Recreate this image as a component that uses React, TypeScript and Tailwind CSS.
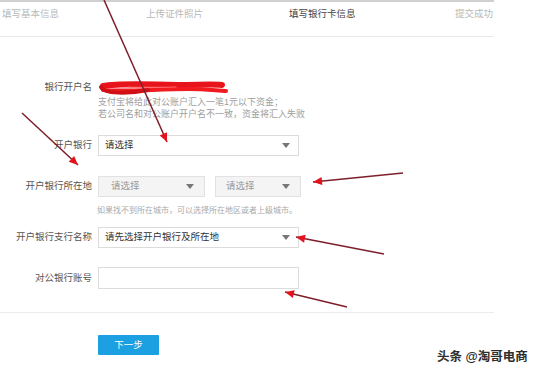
import React from "react";

type Arrow = { x1: number; y1: number; x2: number; y2: number };

// red annotation arrows drawn over the form (tail -> tip)
const arrows: Arrow[] = [
  { x1: 104, y1: 0, x2: 167, y2: 142 },
  { x1: 22, y1: 113, x2: 78, y2: 165 },
  { x1: 403, y1: 173, x2: 313, y2: 182 },
  { x1: 384, y1: 254, x2: 296, y2: 237 },
  { x1: 347, y1: 307, x2: 285, y2: 292 },
];

function arrowHead({ x1, y1, x2, y2 }: Arrow) {
  const len = Math.hypot(x2 - x1, y2 - y1);
  const ux = (x2 - x1) / len;
  const uy = (y2 - y1) / len;
  const size = 9;
  const bx = x2 - ux * size;
  const by = y2 - uy * size;
  const px = -uy * 4;
  const py = ux * 4;
  return `${x2},${y2} ${bx + px},${by + py} ${bx - px},${by - py}`;
}

function Caret() {
  return (
    <svg width="8" height="5" viewBox="0 0 8 5" className="shrink-0">
      <polygon points="0,0 8,0 4,5" fill="#777" />
    </svg>
  );
}

function Label({ children }: { children: React.ReactNode }) {
  return (
    <div className="w-[92px] shrink-0 text-right text-[9.5px] text-[#555]">
      {children}
    </div>
  );
}

const steps = [
  { text: "填写基本信息", w: "w-[144px]", active: false },
  { text: "上传证件照片", w: "w-[143px]", active: false },
  { text: "填写银行卡信息", w: "w-[166px]", active: true },
  { text: "提交成功", w: "w-[38px]", active: false },
];

export default function App() {
  return (
    <div
      className="relative w-[550px] h-[376px] overflow-hidden bg-white"
      style={{ fontFamily: '"Liberation Sans", "Noto Sans CJK SC", sans-serif' }}
    >
      <div className="w-[494px] h-[37px] border-t-2 border-b border-t-[#d0d0d0] border-b-[#e8e8e8] flex items-start pt-[5px] pl-[2px]">
        {steps.map((s) => (
          <div
            key={s.text}
            className={`${s.w} text-[9.5px] leading-[14px] ${
              s.active ? "text-[#444]" : "text-[#b8b8b8]"
            }`}
          >
            {s.text}
          </div>
        ))}
      </div>

      <div className="flex flex-col">
        <div className="flex items-center h-4 mt-[42px] gap-[6px]">
          <Label>银行开户名</Label>
          <svg width="132" height="16" viewBox="0 0 132 16" className="mt-[2px]">
            <path
              d="M5 6 C 20 3, 50 4, 80 5 C 100 5, 115 4, 124 5"
              stroke="#e8141b"
              strokeWidth="6"
              fill="none"
              strokeLinecap="round"
            />
            <path
              d="M5 10 C 25 12, 60 9, 90 9 C 110 9, 120 11, 128 11"
              stroke="#f01a1f"
              strokeWidth="4"
              fill="none"
              strokeLinecap="round"
            />
            <path
              d="M3 7 C 6 14, 30 14, 50 10"
              stroke="#d10f16"
              strokeWidth="4"
              fill="none"
              strokeLinecap="round"
            />
            <path
              d="M30 7 C 45 8, 60 7, 78 7"
              stroke="#ff6a6a"
              strokeWidth="1.2"
              fill="none"
              strokeLinecap="round"
            />
          </svg>
        </div>

        <div className="ml-[98px] mt-[1px] text-[9px] leading-[12px] text-[#a0a0a0]">
          <p>支付宝将给此对公账户汇入一笔1元以下资金；</p>
          <p>若公司名和对公账户开户名不一致，资金将汇入失败</p>
        </div>

        <div className="flex items-center mt-[15px] gap-[6px]">
          <Label>开户银行</Label>
          <div className="w-[201px] h-[21px] border border-[#dcdcdc] bg-white flex items-center justify-between pl-[6px] pr-[8px] text-[9.5px] text-[#333]">
            <span>请选择</span>
            <Caret />
          </div>
        </div>

        <div className="flex items-center mt-[20px] gap-[6px]">
          <Label>开户银行所在地</Label>
          <div className="flex gap-[10px]">
            <div className="w-[107px] h-[21px] border border-[#e2e2e2] bg-[#f4f4f4] flex items-center justify-between pl-[12px] pr-[10px] text-[9.5px] text-[#999]">
              <span>请选择</span>
              <Caret />
            </div>
            <div className="w-[86px] h-[21px] border border-[#e2e2e2] bg-[#f4f4f4] flex items-center justify-between pl-[10px] pr-[10px] text-[9.5px] text-[#999]">
              <span>请选择</span>
              <Caret />
            </div>
          </div>
        </div>

        <p className="ml-[97px] mt-[8px] text-[8px] leading-[12px] text-[#aaa]">
          如果找不到所在城市，可以选择所在地区或者上级城市。
        </p>

        <div className="flex items-center mt-[10px] gap-[6px]">
          <Label>开户银行支行名称</Label>
          <div className="w-[201px] h-[21px] border border-[#dcdcdc] bg-white flex items-center justify-between pl-[6px] pr-[8px] text-[9.5px] text-[#333]">
            <span>请先选择开户银行及所在地</span>
            <Caret />
          </div>
        </div>

        <div className="flex items-center mt-[19px] gap-[6px]">
          <Label>对公银行账号</Label>
          <div className="w-[201px] h-[22px] border border-[#dcdcdc] bg-white" />
        </div>

        <div className="w-[494px] mt-[23px] border-t border-[#ececec]" />

        <div className="ml-[98px] mt-[22px] w-[61px] h-[20px] bg-[#1ca0e2] rounded-[1px] flex items-center justify-center text-[9.5px] text-white">
          下一步
        </div>
      </div>

      <svg
        className="absolute left-0 top-0 pointer-events-none"
        width="550"
        height="376"
      >
        {arrows.map((a, i) => (
          <g key={i}>
            <line
              x1={a.x1}
              y1={a.y1}
              x2={a.x2}
              y2={a.y2}
              stroke="#7d1f2a"
              strokeWidth="1.5"
            />
            <polygon points={arrowHead(a)} fill="#e3121c" />
          </g>
        ))}
      </svg>

      <div
        className="absolute left-[437px] top-[348px] text-[12.5px] font-semibold text-[#2e2e2e] whitespace-nowrap"
        style={{ textShadow: "0 0 2px #fff, 0 0 2px #fff" }}
      >
        头条 @淘哥电商
      </div>
    </div>
  );
}
